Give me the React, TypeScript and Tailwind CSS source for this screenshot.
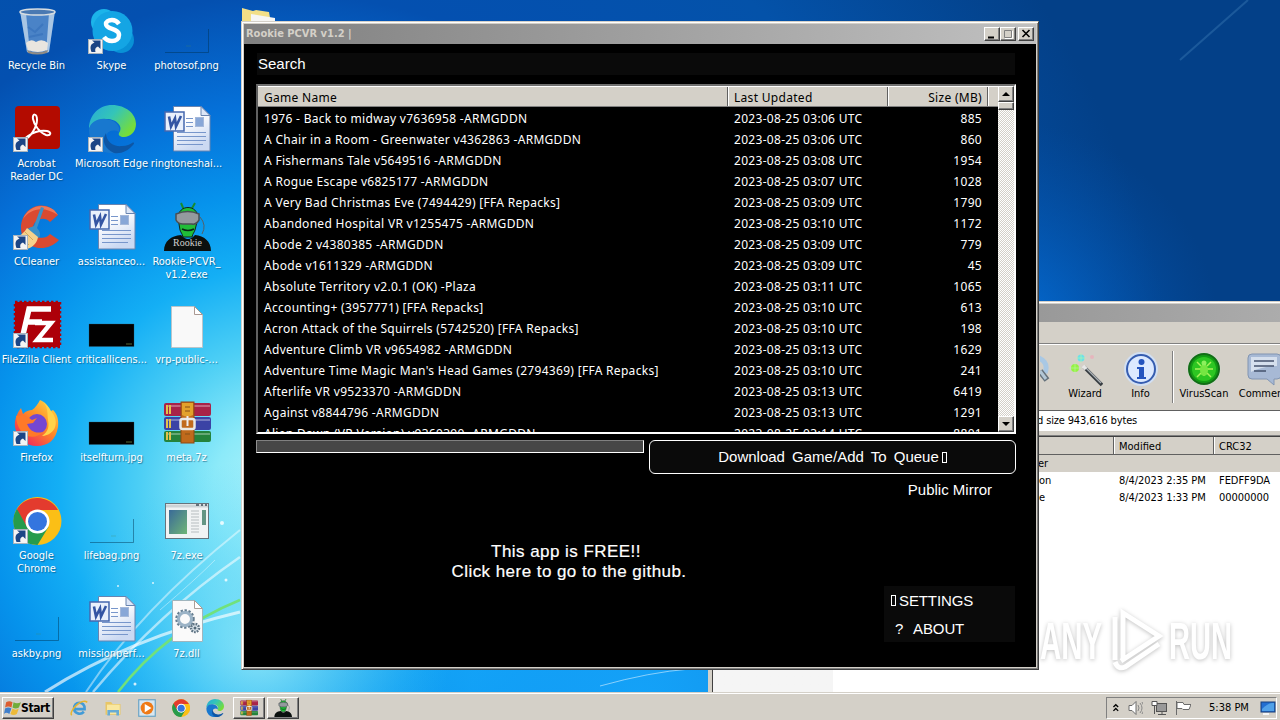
import React from 'react';

const games = [
  ['1976 - Back to midway v7636958 -ARMGDDN', '2023-08-25 03:06 UTC', '885'],
  ['A Chair in a Room - Greenwater v4362863 -ARMGDDN', '2023-08-25 03:06 UTC', '860'],
  ['A Fishermans Tale v5649516 -ARMGDDN', '2023-08-25 03:08 UTC', '1954'],
  ['A Rogue Escape v6825177 -ARMGDDN', '2023-08-25 03:07 UTC', '1028'],
  ['A Very Bad Christmas Eve (7494429) [FFA Repacks]', '2023-08-25 03:09 UTC', '1790'],
  ['Abandoned Hospital VR v1255475 -ARMGDDN', '2023-08-25 03:10 UTC', '1172'],
  ['Abode 2 v4380385 -ARMGDDN', '2023-08-25 03:09 UTC', '779'],
  ['Abode v1611329 -ARMGDDN', '2023-08-25 03:09 UTC', '45'],
  ['Absolute Territory v2.0.1 (OK) -Plaza', '2023-08-25 03:11 UTC', '1065'],
  ['Accounting+ (3957771) [FFA Repacks]', '2023-08-25 03:10 UTC', '613'],
  ['Acron Attack of the Squirrels (5742520) [FFA Repacks]', '2023-08-25 03:10 UTC', '198'],
  ['Adventure Climb VR v9654982 -ARMGDDN', '2023-08-25 03:13 UTC', '1629'],
  ["Adventure Time Magic Man's Head Games (2794369) [FFA Repacks]", '2023-08-25 03:10 UTC', '241'],
  ['Afterlife VR v9523370 -ARMGDDN', '2023-08-25 03:13 UTC', '6419'],
  ['Against v8844796 -ARMGDDN', '2023-08-25 03:13 UTC', '1291'],
  ['Alien Dawn (VR Version) v9369390 -ARMGDDN', '2023-08-25 03:14 UTC', '8801'],
];

const raised = 'bg-[#d4d0c8] border border-t-white border-l-white border-r-[#404040] border-b-[#404040] shadow-[inset_-1px_-1px_0_#808080]';

/* ---------- desktop icons ---------- */

const Shortcut = () => (
  <g>
    <rect x="0.5" y="32.500" width="14" height="14" fill="#f4f4f4" stroke="#a9b4bd" />
    <path d="M3.500 45c-2-5-1-8 3-9.500L4 33.500h8.500V42L10 39.500c-3 1-3 3-2.500 5.500z" fill="#1c4585" />
  </g>
);

const RecycleBin = () => (
  <g>
    <path d="M7 4h35l-6 41q-11 4-22 0z" fill="#8fb6e0" fillOpacity=".5" />
    <path d="M7 4l7 41 3 1L13 6zM42 4l-6 41-3 1 3-40z" fill="#dceaf5" fillOpacity=".65" />
    <path d="M13 36q5-5 10-1 6-4 12 1l-1 7q-9 4-19 0z" fill="#e9e5df" />
    <path d="M14 43q10 5 21 0l-1 3q-10 3-19 0z" fill="#8f8b84" />
    <ellipse cx="24.500" cy="5" rx="17.500" ry="3" fill="#4a79b2" stroke="#d7dde1" strokeWidth="1.500" />
    <path d="M15 20l7 5 8-8M16 30l14-3" fill="none" stroke="#2f6cb8" strokeOpacity=".5" strokeWidth="2" />
  </g>
);

const Skype = () => (
  <g>
    <circle cx="16" cy="15" r="13" fill="#1cb4ea" />
    <circle cx="33" cy="33" r="13" fill="#0991d6" />
    <circle cx="24.500" cy="24" r="20" fill="#14a5e4" />
    <path d="M31 17c-2-3-5-4-7-4-4 0-6 2-6 4 0 6 13 4 13 11 0 4-3 6-7 6-3 0-6-1-8-4" fill="none" stroke="white" strokeWidth="4.500" />
    <Shortcut />
  </g>
);

const GhostImage = () => (
  <g fill="none" stroke="#00304f" strokeOpacity=".45">
    <path d="M2 45.500h43.500V22" />
    <path d="M23 39h5" stroke="#49845f" strokeOpacity=".3" />
  </g>
);

const DarkImage = () => (
  <g>
    <path d="M1 23h45v22.500H1z" fill="black" stroke="#39525e" strokeOpacity=".5" strokeWidth=".6" />
    <path d="M38 43h6" stroke="#6d8241" strokeWidth=".8" />
  </g>
);

const Acrobat = () => (
  <g>
    <rect x="2" y="1" width="45" height="43" rx="4" fill="#b30b00" />
    <path d="M12 34c5-1 12-12 12-19 0-7-5-7-4-1 1 6 7 14 13 16 5 1 6-3 1-4-7-1-13 1-19 5-4 3-5 4-3 3z" fill="none" stroke="white" strokeWidth="2" />
    <Shortcut />
  </g>
);

const EdgeShape = () => (
  <g>
    <path d="M1 24C1 10 11 0 24 0c14 0 24 9 24 19 0 8-6 13-12 13-4 0-6-2-5-4 5-7-3-14-12-14C9 14 3 18 1 24z" fill="url(#edge1)" />
    <path d="M1 25c1-8 9-12 17-11 10 1 15 8 13 13-7-4-16 1-13 10 2 7 10 11 16 10-3 1-7 2-10 1C10 48 1 38 1 25z" fill="#1878cf" />
    <path d="M18 28c0 9 8 14 16 13 5 0 8-2 10-3 2-1 3 0 1 2-5 6-12 9-19 8-9-4-13-12-8-20z" fill="#0d56a5" />
  </g>
);

const Edge = () => (
  <g>
    <EdgeShape />
    <Shortcut />
  </g>
);

const Word = () => (
  <g>
    <path d="M10.500 1.500H38l9 9v35.500H10.500z" fill="url(#page)" stroke="#6984b0" />
    <path d="M38 1.500v9h9z" fill="#dce6f7" stroke="#6984b0" />
    <path d="M23 13.500h7M23 17.500h7M23 21.500h7M14 27.500h29M14 31.500h29M14 35.500h29M14 39.500h26" stroke="#7796cb" />
    <rect x="32.500" y="12.500" width="8" height="9" fill="#88a7d7" stroke="#a4b8da" />
    <rect x="2" y="7" width="19" height="19" fill="#e9f0fc" stroke="#4568af" strokeWidth="1.500" />
    <path d="M6 11.500l2 10 4-8 1 8 5-10.500" fill="none" stroke="#3455a3" strokeWidth="2.600" />
  </g>
);

const CCleaner = () => (
  <g>
    <path d="M45 12l-8 7c-6-7-17-2-17 6 0 10 11 13 17 6l9 6C32 52 8 45 8 25 8 3 33-6 45 12z" fill="#d94a31" />
    <path d="M45 12l-4-5c-11-8-26-4-31 9 7-10 20-14 35-4z" fill="#ef7858" />
    <path d="M28 4l3 1-7 20c3 3 4 7 2 10l-12-8c2-3 5-3 7-4z" fill="#3b91c9" />
    <path d="M14 25l11 9c-1 6-5 10-11 12L1 35c6-2 10-5 13-10z" fill="#f6d28c" />
    <path d="M12 29l8 8M7 33l9 9" stroke="#d4a85b" />
    <Shortcut />
  </g>
);

const RookieShape = () => (
  <g>
    <path d="M18 0l3 7M32 0l-4 7" stroke="#178c2f" strokeWidth="2" />
    <path d="M15 15c0-14 20-14 20 0l-3 12c-1 3-2 3-3 7h-9c-1-4-2-4-3-7z" fill="#20bd38" stroke="#12241b" />
    <path d="M13 11q12-5 23 0v6q-3 5-7 4h-9q-5 0-7-4z" fill="#949a9e" stroke="#4a4f53" strokeWidth="1.500" />
    <path d="M19 26c4 2 8 2 12 0" fill="none" stroke="#082716" strokeWidth="1.500" />
    <path d="M1 48c0-10 7-15 17-16q7 8 14 0c9 1 16 6 16 16z" fill="#0b100e" />
    <path d="M37 14q7 8 2 17" fill="none" stroke="#546068" />
  </g>
);

const Rookie = () => (
  <g>
    <RookieShape />
    <text x="24.500" y="43" textAnchor="middle" fontFamily="Liberation Serif, serif" fontSize="10" fill="#d0d0d0">Rookie</text>
  </g>
);

const FileZilla = () => (
  <g>
    <rect x="2" y="1" width="45" height="45" fill="#ad0009" stroke="#ad0009" strokeWidth="2.500" strokeDasharray="2.500 2" />
    <path d="M38 8H16L9 38M13 21h16" fill="none" stroke="white" strokeWidth="5.500" />
    <path d="M22 22h16L24 39h16" fill="none" stroke="white" strokeWidth="4.500" />
    <Shortcut />
  </g>
);

const BlankFile = () => (
  <g>
    <path d="M8.500 5.500h23l8 8v33h-31z" fill="#f9f9f9" stroke="#b9c5cb" />
    <path d="M31.500 5.500v8h8z" fill="white" stroke="#aa9993" />
  </g>
);

const Firefox = () => (
  <g>
    <path d="M2 28c-1-8 3-15 6-19l2 6c3-3 6-4 9-4 3-2 6-6 8-10 6 3 9 7 9 12l4-2c4 4 6 9 5 17-2 13-10 19-21 19S4 40 2 28z" fill="url(#fox)" />
    <circle cx="24" cy="25" r="10" fill="#7447d2" />
    <path d="M3 17c5-2 11 0 16 4l5-2-4 5-6 1c3 7 8 10 16 8-6 7-17 6-22-1-3-4-5-10-5-15z" fill="#ff7928" />
    <path d="M28 1c8 7 6 13 7 20 2 9-2 13-6 16 14-1 18-15 9-25-2-4-5-8-10-11z" fill="#ffd34a" />
    <Shortcut />
  </g>
);

const RarShape = () => (
  <g>
    <rect x="1" y="4" width="47" height="13" rx="2" fill="#a82348" />
    <rect x="1" y="18" width="47" height="13" rx="2" fill="#3b43a5" />
    <rect x="1" y="32" width="47" height="11" rx="2" fill="#25833c" />
    <path d="M3 7h44M3 21h44M3 35h44" stroke="white" strokeOpacity=".3" strokeWidth="2" />
    <path d="M4 6v9M4 20v9M4 33v8M7 6v9M7 20v9M7 33v8" stroke="#e3c14a" strokeWidth="2" />
    <rect x="18" y="3" width="13" height="41" fill="#c06a1c" stroke="#8d4915" />
    <path d="M19 4h11v12q-6 3-11 0z" fill="#e3a22b" />
    <path d="M22 8h5M22 12h5M22 35h5" stroke="#865019" />
    <rect x="17.500" y="20" width="14" height="10" rx="2" fill="none" stroke="#e9e9e4" strokeWidth="2.500" />
    <path d="M24.500 17v10" stroke="#eee" strokeWidth="2" />
  </g>
);

const ChromeShape = () => (
  <g>
    <circle cx="24.500" cy="24" r="24" fill="#fbbf16" />
    <path d="M3.700 12A24 24 0 0024.500 48l11-18-11-6z" fill="#269b4c" />
    <path d="M4 12l10 18 10-17h21A24 24 0 004 12z" fill="#e33b2e" />
    <circle cx="24.500" cy="24.500" r="12" fill="white" />
    <circle cx="24.500" cy="24.500" r="9.500" fill="#3475df" />
  </g>
);

const Chrome = () => (
  <g>
    <ChromeShape />
    <Shortcut />
  </g>
);

const ExeFile = () => (
  <g>
    <rect x="2.500" y="6.500" width="43" height="35" fill="#f1f3f4" stroke="#66747d" />
    <path d="M3 9h42" stroke="#cdd3d6" strokeWidth="3" />
    <path d="M33 8h3M38 8h2M42 8h2" stroke="#404d58" strokeWidth="1.500" />
    <rect x="6" y="13" width="18" height="24" fill="url(#exe)" />
    <path d="M28 14h8M28 17h8M28 20h8M28 23h8M28 26h8M28 29h8M28 32h8M28 35h8" stroke="#b7bdc0" />
    <path d="M39 13h4v15h-4z" fill="#659584" />
  </g>
);

const DllFile = () => (
  <g>
    <path d="M9.500 5.500h22l8 8v33h-30z" fill="#fafafa" stroke="#a0b5bd" />
    <path d="M31.500 5.500v8h8z" fill="white" stroke="#a99f98" />
    <circle cx="22" cy="24" r="8" fill="#b2c6d5" stroke="#657e91" strokeWidth="3.500" strokeDasharray="2.200 1.500" />
    <circle cx="22" cy="24" r="6.500" fill="#fafafa" stroke="#9bb3c6" strokeWidth="3" />
    <circle cx="32" cy="33" r="4" fill="#dce6ed" stroke="#607585" strokeWidth="2.500" strokeDasharray="1.700 1" />
    <circle cx="32" cy="33" r="1.500" fill="#536877" />
  </g>
);

const desktop: { label: string; icon: React.FC }[] = [
  { label: 'Recycle Bin', icon: RecycleBin },
  { label: 'Skype', icon: Skype },
  { label: 'photosof.png', icon: GhostImage },
  { label: 'Acrobat Reader DC', icon: Acrobat },
  { label: 'Microsoft Edge', icon: Edge },
  { label: 'ringtoneshai...', icon: Word },
  { label: 'CCleaner', icon: CCleaner },
  { label: 'assistanceo...', icon: Word },
  { label: 'Rookie-PCVR_ v1.2.exe', icon: Rookie },
  { label: 'FileZilla Client', icon: FileZilla },
  { label: 'criticallicens...', icon: DarkImage },
  { label: 'vrp-public-...', icon: BlankFile },
  { label: 'Firefox', icon: Firefox },
  { label: 'itselfturn.jpg', icon: DarkImage },
  { label: 'meta.7z', icon: RarShape },
  { label: 'Google Chrome', icon: Chrome },
  { label: 'lifebag.png', icon: GhostImage },
  { label: '7z.exe', icon: ExeFile },
  { label: 'askby.png', icon: GhostImage },
  { label: 'missionperf...', icon: Word },
  { label: '7z.dll', icon: DllFile },
];

const Wallpaper = () => (
  <svg className="absolute inset-0" width="1280" height="720">
    <defs>
      <radialGradient id="sky" gradientUnits="userSpaceOnUse" cx="285" cy="490" r="900">
        <stop offset="0" stopColor="#b5f5fb" />
        <stop offset=".08" stopColor="#8ceaf9" />
        <stop offset=".16" stopColor="#4dcff5" />
        <stop offset=".25" stopColor="#14aff5" />
        <stop offset=".33" stopColor="#0693ec" />
        <stop offset=".43" stopColor="#0570d8" />
        <stop offset=".55" stopColor="#0450b0" />
        <stop offset=".75" stopColor="#0452a9" />
        <stop offset="1" stopColor="#034088" />
      </radialGradient>
      <radialGradient id="glow" gradientUnits="userSpaceOnUse" cx="640" cy="700" r="420">
        <stop offset="0" stopColor="#14a2f8" />
        <stop offset=".4" stopColor="#14a2f8" stopOpacity=".8" />
        <stop offset="1" stopColor="#0878e0" stopOpacity="0" />
      </radialGradient>
      <radialGradient id="glow2" gradientUnits="userSpaceOnUse" cx="1000" cy="340" r="220">
        <stop offset="0" stopColor="#0472dd" />
        <stop offset="1" stopColor="#0454b0" stopOpacity="0" />
      </radialGradient>
      <radialGradient id="glow3" gradientUnits="userSpaceOnUse" cx="260" cy="650" r="190">
        <stop offset="0" stopColor="#9becf9" stopOpacity=".8" />
        <stop offset="1" stopColor="#40c8f6" stopOpacity="0" />
      </radialGradient>
      <linearGradient id="edge1" x1="0" y1="0" x2="1" y2=".6">
        <stop offset="0" stopColor="#26a9da" />
        <stop offset=".5" stopColor="#34c5b8" />
        <stop offset="1" stopColor="#76dd39" />
      </linearGradient>
      <linearGradient id="fox" x1="1" y1="0" x2=".2" y2="1">
        <stop offset="0" stopColor="#ffe34c" />
        <stop offset=".5" stopColor="#ff8a25" />
        <stop offset="1" stopColor="#ee2060" />
      </linearGradient>
      <linearGradient id="exe" x1="0" y1="0" x2="1" y2="1">
        <stop offset="0" stopColor="#396a98" />
        <stop offset="1" stopColor="#70b577" />
      </linearGradient>
      <linearGradient id="page" x1="0" y1="0" x2=".4" y2="1">
        <stop offset=".4" stopColor="#ffffff" />
        <stop offset="1" stopColor="#cbd9f2" />
      </linearGradient>
    </defs>
    <rect width="1280" height="720" fill="url(#sky)" />
    <rect width="1280" height="720" fill="url(#glow)" />
    <rect width="1280" height="720" fill="url(#glow2)" />
    <rect width="1280" height="720" fill="url(#glow3)" />
    <path d="M1180 60L1248 0" stroke="#4a8ac0" strokeOpacity=".35" strokeWidth="2" />
    <g fill="none" stroke="white">
      <path d="M45 692Q130 638 240 612" strokeWidth="3" strokeOpacity=".65" />
      <path d="M86 692Q140 610 240 530" strokeWidth="2" strokeOpacity=".45" />
      <path d="M93 692Q160 612 240 557" strokeWidth="2.500" strokeOpacity=".55" />
      <path d="M160 610Q195 580 215 560" strokeOpacity=".4" />
      <path d="M600 686Q650 672 690 669" strokeOpacity=".5" />
    </g>
    <path d="M118 692Q166 630 240 600" fill="none" stroke="#71e17b" strokeWidth="2.500" />
    <g fill="white" fillOpacity=".8">
      <circle cx="222" cy="523" r="2" />
      <circle cx="226" cy="580" r="1.500" />
      <circle cx="135" cy="684" r="1.500" />
      <circle cx="118" cy="586" r="1" />
      <circle cx="153" cy="583" r="1" />
    </g>
  </svg>
);

const DesktopIcons = () => (
  <div className="relative -ml-px grid w-[225px] grid-cols-3 auto-rows-[98px]">
    {desktop.map(({ label, icon: Icon }) => (
      <div key={label} className="flex flex-col items-center pt-[7px]">
        <svg className="shrink-0 overflow-visible" width="48" height="48" viewBox="0 0 48 48">
          <Icon />
        </svg>
        <span className="mt-1 w-[74px] text-center text-[11px]/[13px] text-white [text-shadow:1px_1px_1px_#00406090]">{label}</span>
      </div>
    ))}
  </div>
);

/* ---------- archive window ---------- */

const Tool = ({ label, className, children }: { label: string; className: string; children: React.ReactNode }) => (
  <div className={`flex shrink-0 flex-col items-center ${className}`}>
    <svg width="36" height="36" viewBox="0 0 36 36">{children}</svg>
    <span className="text-[11px]/[14px]">{label}</span>
  </div>
);

const ArchiveWindow = () => (
  <div className="absolute top-[301px] left-[708px] flex h-[391px] w-[600px] flex-col border-t border-l-4 border-[#d4d0c8] bg-[#d4d0c8] text-[11px] text-black">
    <div className="h-px bg-white" />
    <div className="mt-px h-[18px] bg-linear-to-r from-[#808080] to-[#aeaeae]" />
    <div className="h-[22px] border-b border-[#808080] bg-[#d4d0c8]" />
    <div className="flex h-[65px] border-t border-white pt-[6px] pl-[328px]">
      <svg className="w-[18px] shrink-0" height="36" viewBox="18 0 18 36">
        <path d="M11 5q17 4 12 17" fill="none" stroke="#a9c8e4" strokeWidth="5" />
        <path d="M18 20l7 9" stroke="#64717b" strokeWidth="6" />
        <path d="M18 20l6 8" stroke="#b2c6d5" strokeWidth="3" />
      </svg>
      <Tool label="Wizard" className="w-[54px]">
        <circle cx="8" cy="17" r="4" fill="#95f344" />
        <circle cx="14" cy="7" r="3.500" fill="#6ce2e9" />
        <circle cx="25" cy="6" r="2" fill="#e6b6bd" />
        <path d="M8 11v12M2 17h12M14 2v10M9 7h10" stroke="#c0f5ab" strokeOpacity=".6" />
        <path d="M17 16l18 18" stroke="#373d42" strokeWidth="3.500" />
        <path d="M17 15l17 17" stroke="#aab0b4" strokeWidth="1.500" />
        <path d="M16 15l3 3" stroke="#e7e7e7" strokeWidth="3.500" />
      </Tool>
      <Tool label="Info" className="w-[57px]">
        <circle cx="18" cy="18" r="17" fill="#d1dff3" />
        <circle cx="18" cy="18" r="14" fill="#dce9ff" stroke="#365db0" strokeWidth="2" />
        <circle cx="18.500" cy="11" r="3" fill="#2454bf" />
        <path d="M14 16h7v10h2v2h-9v-2h2v-8h-2z" fill="#2454bf" />
      </Tool>
      <div className="ml-[3px] h-[52px] w-0.5 shrink-0 border-l border-[#808080] bg-white" />
      <Tool label="VirusScan" className="w-[60px]">
        <circle cx="18" cy="18" r="16.500" fill="#cedacc" />
        <circle cx="18" cy="18" r="15" fill="#129c14" stroke="#126d16" strokeWidth="2" />
        <circle cx="18" cy="18" r="12" fill="#2dc622" />
        <path d="M18 11v14M11 11l4 4M25 11l-4 4M9 18h18M11 26l4-4M25 26l-4-4" stroke="#aaf25c" strokeWidth="1.500" />
        <ellipse cx="18" cy="19" rx="4" ry="6" fill="#76e642" />
        <circle cx="18" cy="12" r="2.500" fill="#8df05d" />
      </Tool>
      <Tool label="Comment" className="w-[58px]">
        <path d="M7 3h25q4 0 4 4v17q0 4-4 4h-3v6l-7-6H7q-4 0-4-4V7q0-4 4-4z" fill="#a7b9d5" stroke="#8295b2" />
        <path d="M6 6h26v9q-15 0-26 6z" fill="#d5dfed" />
        <path d="M9 10h20M9 15h20M9 20h12" stroke="#44516c" strokeWidth="1.500" />
      </Tool>
    </div>
    <div className="mt-px h-[22px] shrink-0 border-y border-t-[#606060] border-b-[#d4d0c8] bg-white pl-[325px] text-[11px]/[20px] tracking-[-0.15px]">d size 943,616 bytes</div>
    <div className="mt-[3px] border-t border-[#808080]" />
    <div className="flex min-h-0 flex-1 flex-col border-t border-l border-[#404040] bg-white">
      <div className="flex h-[18px] shrink-0 border-b border-[#606060] bg-[#d4d0c8] leading-[19px]">
        <div className="w-[401px] border-r border-[#606060]" />
        <div className="w-[100px] border-r border-l border-r-[#606060] border-l-white pl-1">Modified</div>
        <div className="flex-1 border-l border-white pl-1">CRC32</div>
      </div>
      <div className="h-[17px] shrink-0 bg-[#d4d0c8] pl-[325px] leading-[17px]">er</div>
      <div className="grid min-h-0 flex-1 auto-rows-[17px] grid-cols-[120px_286px_100px_1fr] bg-linear-to-r from-[#f5f5f5] from-[120px] to-white to-[120px] leading-[17px] tracking-[-0.05px]">
        <span />
        <span className="pl-[206px]">on</span>
        <span>8/4/2023 2:35 PM</span>
        <span>FEDFF9DA</span>
        <span />
        <span className="pl-[206px]">e</span>
        <span>8/4/2023 1:33 PM</span>
        <span>00000000</span>
      </div>
    </div>
  </div>
);

const Watermark = () => (
  <svg className="absolute top-[600px] left-[1036px] drop-shadow-[0_1px_2px_#00000040]" width="204" height="80">
    <g fill="white" fontFamily="Liberation Sans, sans-serif" fontWeight="bold" fontSize="51">
      <text x="4" y="59" textLength="62" lengthAdjust="spacingAndGlyphs">ANY</text>
      <text x="133" y="59" textLength="63" lengthAdjust="spacingAndGlyphs">RUN</text>
    </g>
    <path d="M87 60V13l36 23-38 25M79 60V17M79 62q3 8 10 5l34-23" fill="none" stroke="white" strokeWidth="5" />
  </svg>
);

/* ---------- Rookie window ---------- */

const CaptionButton = ({ children }: { children: React.ReactNode }) => (
  <div className={`h-[14px] w-4 ${raised}`}>
    <svg width="14" height="12" viewBox="0 0 14 12" fill="none">{children}</svg>
  </div>
);

const MissingGlyph = () => <span className="inline-block h-[11px] w-[5px] border border-white" />;

const RookieWindow = () => (
  <div className="absolute top-[21px] left-[241px] flex h-[649px] w-[798px] flex-col border border-t-[#d4d0c8] border-r-[#404040] border-b-[#404040] border-l-[#d4d0c8] bg-[#d4d0c8] px-px pt-px shadow-[inset_1px_1px_0_white,inset_-1px_-1px_0_#808080]">
    <div className="mx-px mt-px flex h-5 shrink-0 items-center bg-linear-to-r from-[#808080] to-[#c0c0c0] pl-0.5">
      <span className="flex-1 text-[11px] font-bold text-[#d4d0c8]">Rookie PCVR v1.2 |</span>
      <CaptionButton><path d="M3 9.500h6" stroke="black" strokeWidth="2" /></CaptionButton>
      <CaptionButton>
        <path d="M3.500 2.500h7v7h-7z" stroke="#808080" />
        <path d="M11.500 3v7.500H4" stroke="white" />
      </CaptionButton>
      <div className="mr-0.5 ml-0.5"><CaptionButton><path d="M3.500 2l7 7M10.500 2l-7 7" stroke="black" strokeWidth="1.600" /></CaptionButton></div>
    </div>
    <div className="mx-px mb-[2px] flex min-h-0 flex-1 flex-col bg-black pt-[9px] pr-[21px] pl-3 font-['Liberation_Sans',sans-serif] text-white">
      <div className="ml-px h-[22px] shrink-0 bg-[#0a0a0a] pl-px text-[15px]/[22px]">Search</div>
      <div className="mt-[9px] flex h-[350px] w-[760px] shrink-0 border-2 border-t-[#707070] border-r-white border-b-white border-l-[#606060] font-['Noto_Sans',sans-serif] text-[12px] tracking-[0.3px]">
        <div className="flex min-w-0 flex-1 flex-col overflow-hidden">
          <div className="mb-px flex h-[21px] shrink-0 border-t border-b border-t-white border-b-[#808080] bg-[#d4d0c8] leading-[21px] text-black">
            <div className="w-[470px] border-r border-[#606060] pl-1.5">Game Name</div>
            <div className="w-40 border-r border-l border-r-[#606060] border-l-white pl-[5px]">Last Updated</div>
            <div className="w-[100px] border-r border-l border-r-[#606060] border-l-white pr-[5px] text-right">Size (MB)</div>
            <div className="flex-1 border-l border-white" />
          </div>
          {games.map(([name, updated, size]) => (
            <div key={name} className="flex h-[21px] shrink-0 pl-1.5 leading-[21px]">
              <span className="w-[470px]">{name}</span>
              <span className="w-40">{updated}</span>
              <span className="w-[88px] text-right">{size}</span>
            </div>
          ))}
        </div>
        <div className="flex w-4 flex-col bg-[#eceae5]">
          <div className={`flex h-4 items-center justify-center ${raised}`}>
            <svg width="8" height="4"><path d="M0 4l4-4 4 4z" fill="black" /></svg>
          </div>
          <div className={`h-2 ${raised}`} />
          <div className="flex-1 bg-[repeating-conic-gradient(#d4d0c8_0_25%,white_0_50%)] bg-size-[2px_2px]" />
          <div className={`flex h-4 items-center justify-center ${raised}`}>
            <svg width="8" height="4"><path d="M0 0l4 4 4-4z" fill="black" /></svg>
          </div>
        </div>
      </div>
      <div className="mt-1.5 flex w-[760px] shrink-0 items-start justify-between">
        <div className="h-[13px] w-[388px] border border-t-[#808080] border-r-white border-b-white border-l-[#909090] bg-[#464646]" />
        <div className="flex h-[34px] w-[367px] items-center justify-center gap-[3px] rounded-[6px] border border-white bg-[#0a0a0a] text-[15px] [word-spacing:3px]">
          <span>Download Game/Add To Queue</span>
          <MissingGlyph />
        </div>
      </div>
      <div className="mt-[7px] shrink-0 pr-[23px] text-right text-[15px]/[18px]">Public Mirror</div>
      <div className="mt-[43px] w-[626px] shrink-0 text-center text-[17px]/[20px] tracking-[0.45px] [-webkit-text-stroke:0.2px_white]">
        <div className="pr-1.5">This app is FREE!!</div>
        <div>Click here to go to the github.</div>
      </div>
      <div className="mt-1 ml-auto w-[131px] shrink-0 bg-[#0a0a0a] text-[15px]/[28px] tracking-[-0.1px]">
        <div className="flex items-center gap-[3px] pl-[7px]"><MissingGlyph /><span className="mt-px -mb-px">SETTINGS</span></div>
        <div className="mt-px -mb-px flex pl-[11px]"><span className="w-[18px]">?</span><span>ABOUT</span></div>
      </div>
    </div>
  </div>
);

/* ---------- taskbar ---------- */

const Quick = ({ children }: { children: React.ReactNode }) => (
  <svg className="w-[18px] shrink-0" height="18" viewBox="0 0 48 48">{children}</svg>
);

const Taskbar = () => (
  <div className="absolute inset-x-0 bottom-0 flex h-7 items-center border-t border-[#d4d0c8] bg-[#d4d0c8] pt-0.5 pr-[3px] pl-0.5 text-black shadow-[inset_0_1px_0_white]">
    <div className={`flex h-[22px] w-[52px] items-center pl-px ${raised}`}>
      <svg className="shrink-0" width="17" height="17" viewBox="0 0 16 16">
        <path d="M2 3q3-2 6 0L7 8Q4 6 1 8z" fill="#dc5d30" />
        <path d="M9 3q3 2 7 0l-2 5q-3 2-6 0z" fill="#71ac3b" />
        <path d="M1 9q3-2 6 0l-2 5q-3-2-5 0z" fill="#407fcb" />
        <path d="M8 9q3 2 6 0l-2 5q-3 2-6 0z" fill="#edba39" />
      </svg>
      <span className="text-[12px] font-bold tracking-[-0.4px]">Start</span>
    </div>
    <div className="ml-4 flex gap-4">
      <Quick>
        <path d="M11 27h28c1-12-7-17-14-17-9 0-14 7-14 15 0 12 16 20 26 9" fill="none" stroke="#429bd7" strokeWidth="7" />
        <path d="M5 43C-6 36 32-6 46 9" fill="none" stroke="#e8b52d" strokeWidth="4" />
      </Quick>
      <Quick>
        <path d="M4 8h15l4 5h21v29H4z" fill="#e8c666" />
        <path d="M8 15h34v25H8z" fill="#f9e7a0" />
        <path d="M9 44V29h31v15h-7v-8H16v8z" fill="#68abd4" />
      </Quick>
      <Quick>
        <rect x="2" y="2" width="44" height="44" fill="#d9e7f0" stroke="#62a0c5" strokeWidth="3" />
        <circle cx="24" cy="24" r="17" fill="#f07a16" />
        <path d="M18 13v22l18-11z" fill="white" />
      </Quick>
      <Quick><ChromeShape /></Quick>
      <Quick><EdgeShape /></Quick>
    </div>
    <div className="ml-[9px] flex gap-0.5">
      <div className={`flex h-[22px] w-8 items-center justify-center ${raised}`}><Quick><RarShape /></Quick></div>
      <div className={`flex h-[22px] w-8 items-center justify-center ${raised}`}><Quick><RookieShape /></Quick></div>
    </div>
    <div className="ml-auto flex h-[22px] w-[171px] items-center border border-t-[#808080] border-r-white border-b-white border-l-[#808080] pl-[5px]">
      <svg width="8" height="10" viewBox="0 0 8 10" fill="none" stroke="black" strokeWidth="1.400"><path d="M1.500 4L4 1.500 6.500 4M1.500 8L4 5.500 6.500 8" /></svg>
      <svg className="ml-2" width="16" height="16" fill="none" stroke="#6c6c6c">
        <path d="M1 5.500h3l4-4v13l-4-4H1z" fill="white" />
        <path d="M10 5q2 3 0 6M12 3q4 5 0 10M14 2q4 6 0 12" stroke="#888" />
      </svg>
      <svg className="ml-2" width="17" height="16" fill="none" stroke="#545454">
        <rect x="5.500" y="3.500" width="10" height="8" fill="#999" />
        <path d="M7 14.500h8M11 12v3" />
        <path d="M1 1.500h5v4H1zM3.500 6v8" fill="white" />
      </svg>
      <svg className="ml-2" width="17" height="16" stroke="#6b6b6b" fill="white">
        <path d="M1.500 1v14M2 2.500h6l1 2h7l-2 5H8l-1-1H2z" />
      </svg>
      <span className="mt-px ml-[18px] w-[51px] shrink-0 text-[11px] whitespace-nowrap">5:38 PM</span>
      <svg className="shrink-0" width="16" height="14">
        <rect x="1" y="1" width="14" height="10" fill="#236ed0" stroke="#173f7c" />
        <path d="M2 8q7-7 12-6v8H2z" fill="#51a1e8" />
        <path d="M3 13h6" stroke="#f5f5f5" strokeWidth="2" />
      </svg>
    </div>
  </div>
);

const App: React.FC = () => (
  <div className="relative h-[720px] w-[1280px] overflow-hidden bg-[#0452a9] font-['DejaVu_Sans_Condensed','Noto_Sans',sans-serif]">
    <Wallpaper />
    <DesktopIcons />
    <svg className="absolute top-[7px] left-[242px]" width="36" height="16">
      <path d="M0 1l11 3 3-1 13 2 2 11H0z" fill="#f2df87" />
      <path d="M9 7l18 3 6 1v5H9z" fill="#f6f6f4" />
    </svg>
    <ArchiveWindow />
    <Watermark />
    <RookieWindow />
    <Taskbar />
  </div>
);

export default App;
